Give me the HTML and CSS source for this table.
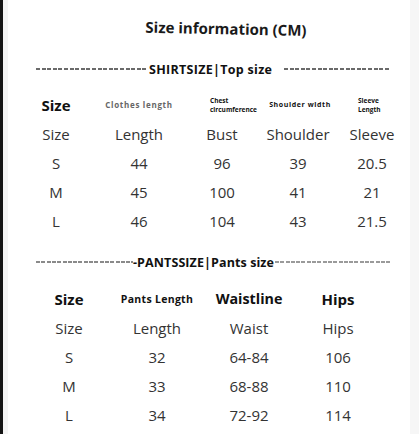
FILE: index.html
```html
<!DOCTYPE html>
<html>
<head>
<meta charset="utf-8">
<link rel="stylesheet" href="styles.css">
</head>
<body>
<div class="page">
  <h1 class="title">Size information (CM)</h1>

  <div class="divider shirt-div">
    <span class="dash d1"></span>
    <span class="label">SHIRTSIZE|Top size</span>
    <span class="dash d2"></span>
  </div>

  <div class="grid shirt">
    <div class="hd big">Size</div>
    <div class="hd small gray">Clothes length</div>
    <div class="hd tiny chest">Chest<br>circumference</div>
    <div class="hd small sw">Shoulder width</div>
    <div class="hd tiny sleeve">Sleeve<br>Length</div>

    <div>Size</div><div>Length</div><div>Bust</div><div>Shoulder</div><div>Sleeve</div>
    <div>S</div><div>44</div><div>96</div><div>39</div><div>20.5</div>
    <div>M</div><div>45</div><div>100</div><div>41</div><div>21</div>
    <div>L</div><div>46</div><div>104</div><div>43</div><div>21.5</div>
  </div>

  <div class="divider pants-div">
    <span class="dash d3"></span>
    <span class="label">-PANTSSIZE|Pants size</span>
    <span class="dash d4"></span>
  </div>

  <div class="grid pants">
    <div class="hd big">Size</div>
    <div class="hd mid">Pants Length</div>
    <div class="hd big waist">Waistline</div>
    <div class="hd big">Hips</div>

    <div>Size</div><div>Length</div><div>Waist</div><div>Hips</div>
    <div>S</div><div>32</div><div>64-84</div><div>106</div>
    <div>M</div><div>33</div><div>68-88</div><div>110</div>
    <div>L</div><div>34</div><div>72-92</div><div>114</div>
  </div>
</div>
</body>
</html>
```

FILE: styles.css
```css
html, body {
  margin: 0;
  padding: 0;
}
body {
  width: 419px;
  height: 434px;
  overflow: hidden;
  box-sizing: border-box;
  border-left: 3px solid #141414;
  background: linear-gradient(to right, #f4f4f4 0 8px, #ffffff 8px 410px, #f6f6f6 410px);
  font-family: "Open Sans", "Noto Sans", sans-serif;
  color: #333333;
}
.page {
  display: flex;
  flex-direction: column;
}
.title {
  margin: 18px 0 0 0;
  height: 20px;
  line-height: 20px;
  font-size: 15px;
  font-weight: 700;
  color: #1a1a1a;
  text-align: center;
  padding-left: 30px;
  transform: rotate(1.2deg);
}
.divider {
  display: flex;
  align-items: center;
  height: 16px;
  margin-top: 23px;
}
.dash {
  height: 1.5px;
  background: repeating-linear-gradient(to right, #6a6a6a 0 4px, transparent 4px 5.6px);
}
.d1 { margin-left: 33px; width: 110px; }
.d2 { margin-left: 12px; width: 106px; }
.d3 { margin-left: 33px; width: 97px; background: repeating-linear-gradient(to right, #8a8a8a 0 4px, transparent 4px 5.3px); }
.d4 { margin-left: 1px; width: 115px; background: repeating-linear-gradient(to right, #9a9a9a 0 4px, transparent 4px 5.3px); }
.label {
  font-size: 12.5px;
  font-weight: 700;
  color: #111;
  margin-left: 3px;
  letter-spacing: 0.3px;
  white-space: nowrap;
}
.pants-div .label {
  margin-left: 0;
  letter-spacing: 0.1px;
}
.pants-div { margin-top: 19px; }
.grid {
  display: grid;
  grid-auto-rows: 29px;
  align-items: center;
  text-align: center;
  font-size: 15px;
}
.shirt {
  margin-top: 13px;
  padding-left: 13px;
  grid-template-columns: 80px 86px 80px 72px 76px;
}
.pants {
  margin-top: 14px;
  padding-left: 22px;
  grid-template-columns: 88px 88px 96px 82px;
}
.hd {
  color: #111;
  font-weight: 700;
}
.big { font-size: 15px; }
.waist { font-size: 14.3px; }
.small {
  font-size: 8px;
  letter-spacing: 0.7px;
}
.sw {
  font-size: 7px;
  letter-spacing: 0.6px;
  padding-left: 4px;
}
.gray { color: #666; }
.tiny {
  font-size: 6.5px;
  line-height: 9px;
  text-align: left;
}
.chest { padding-left: 28px; }
.sleeve { padding-left: 24px; }
.mid { font-size: 10.5px; letter-spacing: 0.3px; }
```
